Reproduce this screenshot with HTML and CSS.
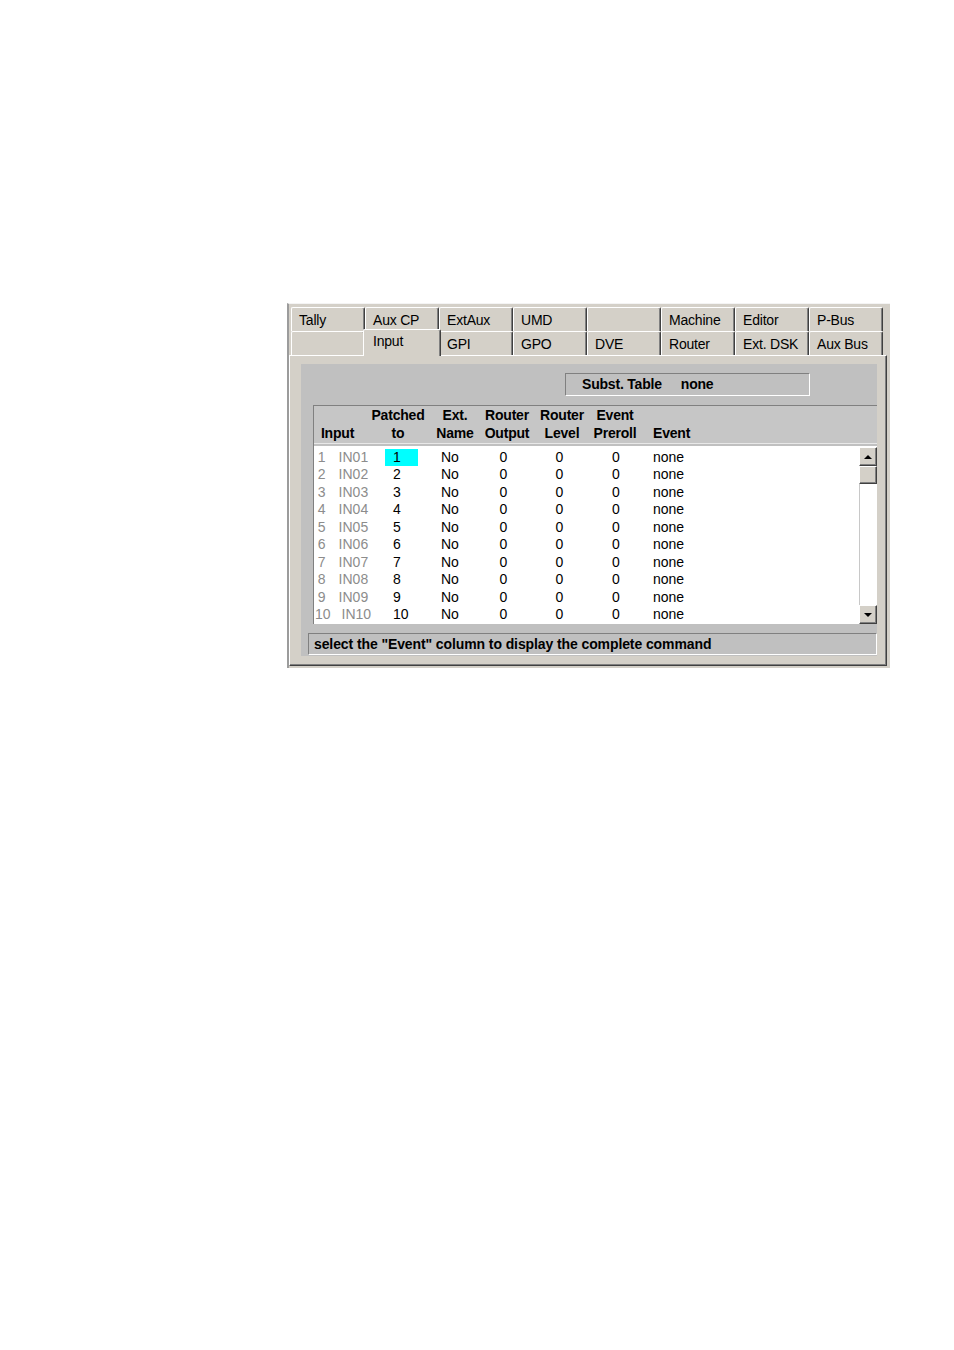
FILE: index.html
```html
<!DOCTYPE html>
<html>
<head>
	<title>Input</title>
	<link rel="stylesheet" href="styles.css">
</head>
<body>
<div class="window">
	<div class="tabRow">
		<span class="tab">Tally</span>
		<span class="tab">Aux CP</span>
		<span class="tab">ExtAux</span>
		<span class="tab">UMD</span>
		<span class="tab"></span>
		<span class="tab">Machine</span>
		<span class="tab">Editor</span>
		<span class="tab">P-Bus</span>
	</div>
	<div class="tabRow">
		<span class="tab"></span>
		<span class="tab active">Input</span>
		<span class="tab">GPI</span>
		<span class="tab">GPO</span>
		<span class="tab">DVE</span>
		<span class="tab">Router</span>
		<span class="tab">Ext. DSK</span>
		<span class="tab">Aux Bus</span>
	</div>
	<div class="content">
		<div class="pane">
			<div class="substBar">
				<div class="subst">Subst. Table<span class="substVal">none</span></div>
			</div>
			<div class="grid">
				<div class="gridHead">
					<div class="hc"><br>Input</div>
					<div class="hc">Patched<br>to</div>
					<div class="hc">Ext.<br>Name</div>
					<div class="hc">Router<br>Output</div>
					<div class="hc">Router<br>Level</div>
					<div class="hc">Event<br>Preroll</div>
					<div class="hc hcLeft"><br>Event</div>
				</div>
				<div class="gridBody">
					<div class="rows">
						<div class="row"><span class="inp"><span>1</span><span class="nm">IN01</span></span><span class="pt sel">1</span><span class="ext">No</span><span class="num">0</span><span class="num">0</span><span class="num">0</span><span class="ev">none</span></div>
						<div class="row"><span class="inp"><span>2</span><span class="nm">IN02</span></span><span class="pt">2</span><span class="ext">No</span><span class="num">0</span><span class="num">0</span><span class="num">0</span><span class="ev">none</span></div>
						<div class="row"><span class="inp"><span>3</span><span class="nm">IN03</span></span><span class="pt">3</span><span class="ext">No</span><span class="num">0</span><span class="num">0</span><span class="num">0</span><span class="ev">none</span></div>
						<div class="row"><span class="inp"><span>4</span><span class="nm">IN04</span></span><span class="pt">4</span><span class="ext">No</span><span class="num">0</span><span class="num">0</span><span class="num">0</span><span class="ev">none</span></div>
						<div class="row"><span class="inp"><span>5</span><span class="nm">IN05</span></span><span class="pt">5</span><span class="ext">No</span><span class="num">0</span><span class="num">0</span><span class="num">0</span><span class="ev">none</span></div>
						<div class="row"><span class="inp"><span>6</span><span class="nm">IN06</span></span><span class="pt">6</span><span class="ext">No</span><span class="num">0</span><span class="num">0</span><span class="num">0</span><span class="ev">none</span></div>
						<div class="row"><span class="inp"><span>7</span><span class="nm">IN07</span></span><span class="pt">7</span><span class="ext">No</span><span class="num">0</span><span class="num">0</span><span class="num">0</span><span class="ev">none</span></div>
						<div class="row"><span class="inp"><span>8</span><span class="nm">IN08</span></span><span class="pt">8</span><span class="ext">No</span><span class="num">0</span><span class="num">0</span><span class="num">0</span><span class="ev">none</span></div>
						<div class="row"><span class="inp"><span>9</span><span class="nm">IN09</span></span><span class="pt">9</span><span class="ext">No</span><span class="num">0</span><span class="num">0</span><span class="num">0</span><span class="ev">none</span></div>
						<div class="row"><span class="inp"><span>10</span><span class="nm nm10">IN10</span></span><span class="pt">10</span><span class="ext">No</span><span class="num">0</span><span class="num">0</span><span class="num">0</span><span class="ev">none</span></div>
					</div>
					<div class="scroll">
						<div class="sbBtn"><span class="arrUp"></span></div>
						<div class="sbBtn sbThumb"></div>
						<div class="sbTrack"></div>
						<div class="sbBtn"><span class="arrDown"></span></div>
					</div>
				</div>
			</div>
			<div class="status">select the "Event" column to display the complete command</div>
		</div>
	</div>
</div>
</body>
</html>
```

FILE: styles.css
```css
	body {margin: 0; background: #fff; font-family: "Liberation Sans", Arial, sans-serif; font-size: 14px; color: #000;}

	.window {box-sizing: border-box; width: 603px; height: 365px; margin: 303px 0 0 287px; padding: 3px 3px 0 0; background: #d4d0c8; border-top: 1px solid #f4f4f4; border-left: 2px solid #9c9c9c;}

/* tabs */
	.tabRow {display: flex; margin-left: 2px; height: 24px;}
	.tab {box-sizing: border-box; width: 74px; height: 24px; padding: 4px 0 0 7px; line-height: 17px; letter-spacing: -0.2px; background: #d4d0c8; border-top: 1px solid #fff; border-left: 1px solid #fff; border-right: 1px solid #404040; box-shadow: inset -1px 0 #808080; border-radius: 2px 2px 0 0; white-space: nowrap;}
	.tab.active {position: relative; z-index: 1; width: 78px; height: 27px; margin: -2px -2px 0 -2px; padding: 3px 0 0 9px;}

/* content */
	.content {box-sizing: border-box; height: 311px; padding: 8px 9px 9px 11px; border-top: 1px solid #fff; border-left: 1px solid #fff; border-right: 1px solid #404040; border-bottom: 1px solid #404040; box-shadow: inset -1px -1px #808080;}
	.pane {height: 292px; padding-top: 9px; box-sizing: border-box; background: #c0c0c0;}

	.substBar {display: flex; padding-left: 264px;}
	.subst {box-sizing: border-box; width: 245px; height: 23px; padding-left: 16px; line-height: 21px; font-weight: bold; letter-spacing: -0.2px; border-top: 1px solid #808080; border-left: 1px solid #808080; border-bottom: 1px solid #fff; border-right: 1px solid #fff;}
	.substVal {margin-left: 19px;}

/* table */
	.grid {margin: 9px 0 0 12px; border-left: 1px solid #808080;}
	.gridHead {display: grid; grid-template-columns: 47px 74px 40px 64px 46px 60px 1fr; height: 37px; border-top: 1px solid #808080; border-bottom: 1px solid #e8e8e8; background: #c6c6c6; font-weight: bold; line-height: 18px; letter-spacing: -0.2px;}
	.hc {text-align: center; white-space: nowrap;}
	.hc.hcLeft {text-align: left; padding-left: 8px;}

	.gridBody {display: flex; height: 178px; margin-top: 2px; background: #fff;}
	.rows {flex: 1; padding-top: 2.5px;}
	.row {display: grid; grid-template-columns: 71px 33px 58px 55px 57px 56px 1fr; height: 17.5px; line-height: 17.5px; white-space: nowrap;}
	.inp {padding-right: 13px; text-align: center; color: #8c8c8c;}
	.nm {margin-left: 13px;}
	.nm10 {margin-left: 11px;}
	.pt {padding-left: 8px;}
	.pt.sel {background: #00ffff; margin-bottom: 1px;}
	.ext {padding-left: 23px;}
	.num {text-align: center;}
	.ev {padding-left: 9px;}

/* scrollbar */
	.scroll {display: flex; flex-direction: column; width: 18px; padding-top: 1px;}
	.sbBtn {box-sizing: border-box; display: flex; align-items: center; justify-content: center; height: 19px; background: #d4d0c8; border-top: 1px solid #fff; border-left: 1px solid #fff; border-right: 1px solid #404040; border-bottom: 1px solid #404040; box-shadow: inset -1px -1px #808080;}
	.sbThumb {height: 18px;}
	.sbTrack {flex: 1; background: #fff; border-left: 1px solid #c8c8c8;}
	.arrUp {width: 0; height: 0; border-left: 4px solid transparent; border-right: 4px solid transparent; border-bottom: 4px solid #000;}
	.arrDown {width: 0; height: 0; border-left: 4px solid transparent; border-right: 4px solid transparent; border-top: 4px solid #000;}

/* status */
	.status {box-sizing: border-box; height: 22px; margin: 9px 0 0 7px; padding-left: 5px; line-height: 20px; font-weight: bold; letter-spacing: -0.1px; white-space: nowrap; border-top: 1px solid #808080; border-left: 1px solid #808080; border-bottom: 1px solid #fff; border-right: 1px solid #fff;}
```
